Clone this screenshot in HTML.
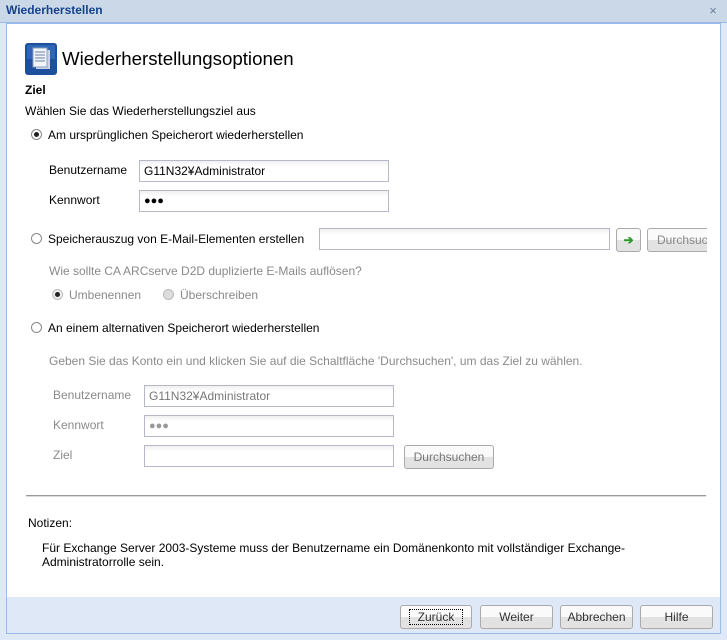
<!DOCTYPE html><html><head><style>
*{margin:0;padding:0;box-sizing:border-box}
body{width:727px;height:640px;position:relative;background:#dfe8f6;font-family:"Liberation Sans",sans-serif;font-size:12px;color:#000;overflow:hidden}
.a{position:absolute;white-space:nowrap}
.g{color:#8a8a8a}
.in{position:absolute;height:22px;border:1px solid #b5b8c8;background:linear-gradient(#f0f0f0,#fff 5px);padding:3px 4px;font-size:12px}
.rad{position:absolute;width:11px;height:11px;border-radius:50%;border:1px solid #888;background:#fff}
.rad.on:after{content:"";position:absolute;left:2px;top:2px;width:5px;height:5px;border-radius:50%;background:#222}
.btn{position:absolute;height:24px;border:1px solid #aaa;border-radius:3px;background:linear-gradient(#fafafa 50%,#e2e2e2 50%);text-align:center;line-height:22px;font-size:12px;color:#333}
</style></head><body>
<div class="a" style="left:0;top:0;width:727px;height:23px;background:#cbd8e8;border-bottom:1px solid #99bbe8"></div>
<div class="a" style="left:6px;top:3px;font-weight:bold;color:#15428b;font-size:12px">Wiederherstellen</div>
<div class="a" style="left:706px;top:4px;width:14px;height:14px;color:#6a7fa0;font-size:13px;line-height:14px;text-align:center">×</div>
<div class="a" style="left:6px;top:23px;width:715px;height:611px;border:1px solid #99bbe8;background:#dfe8f6"></div>
<div class="a" style="left:7px;top:24px;width:713px;height:573px;background:#fff"></div>
<svg class="a" style="left:25px;top:43px" width="32" height="32"><rect width="32" height="32" rx="3" fill="#1c4f9c"/><rect x="2" y="2" width="28" height="14" fill="#3a74c4" opacity=".6"/><rect x="11" y="7" width="14" height="19" fill="#c9d3e3"/><rect x="8" y="5" width="14" height="19" fill="#f2f5fa" stroke="#8aa0c0"/><g stroke="#6a80a8"><line x1="10" y1="9" x2="20" y2="9"/><line x1="10" y1="12" x2="20" y2="12"/><line x1="10" y1="15" x2="20" y2="15"/><line x1="10" y1="18" x2="20" y2="18"/></g></svg>
<div class="a" style="left:62px;top:48px;font-size:18.7px">Wiederherstellungsoptionen</div>
<div class="a" style="left:25px;top:83px;font-weight:bold">Ziel</div>
<div class="a" style="left:25px;top:104px">Wählen Sie das Wiederherstellungsziel aus</div>
<div class="rad on" style="left:31px;top:129px"></div>
<div class="a" style="left:48px;top:128px">Am ursprünglichen Speicherort wiederherstellen</div>
<div class="a" style="left:49px;top:163px">Benutzername</div>
<div class="in" style="left:139px;top:160px;width:250px">G11N32¥Administrator</div>
<div class="a" style="left:49px;top:193px">Kennwort</div>
<div class="in" style="left:139px;top:190px;width:250px;font-size:11px;line-height:14px">●●●</div>
<div class="rad" style="left:31px;top:233px"></div>
<div class="a" style="left:48px;top:232px">Speicherauszug von E-Mail-Elementen erstellen</div>
<div class="in" style="left:319px;top:228px;width:291px"></div>
<div class="btn" style="left:616px;top:228px;width:25px;color:#2a9a2a;font-weight:bold">➔</div>
<div class="a" style="left:647px;top:228px;width:60px;height:24px;overflow:hidden"><div class="btn" style="left:0;top:0;width:80px;color:#888;text-align:left;padding-left:9px">Durchsuchen</div></div>
<div class="a g" style="left:49px;top:264px">Wie sollte CA ARCserve D2D duplizierte E-Mails auflösen?</div>
<div class="rad on" style="left:52px;top:289px;border-color:#bbb;background:#eee"></div>
<div class="a g" style="left:69px;top:288px">Umbenennen</div>
<div class="rad" style="left:163px;top:289px;border-color:#bbb;background:#ddd"></div>
<div class="a g" style="left:180px;top:288px">Überschreiben</div>
<div class="rad" style="left:31px;top:322px"></div>
<div class="a" style="left:48px;top:321px">An einem alternativen Speicherort wiederherstellen</div>
<div class="a g" style="left:49px;top:354px">Geben Sie das Konto ein und klicken Sie auf die Schaltfläche 'Durchsuchen', um das Ziel zu wählen.</div>
<div class="a g" style="left:53px;top:388px">Benutzername</div>
<div class="in" style="left:144px;top:385px;width:250px;color:#777">G11N32¥Administrator</div>
<div class="a g" style="left:53px;top:418px">Kennwort</div>
<div class="in" style="left:144px;top:415px;width:250px;color:#999;font-size:11px;line-height:14px">●●●</div>
<div class="a g" style="left:53px;top:448px">Ziel</div>
<div class="in" style="left:144px;top:445px;width:250px"></div>
<div class="btn" style="left:404px;top:445px;width:90px;color:#777">Durchsuchen</div>
<div class="a" style="left:26px;top:495px;width:680px;height:2px;background:#999;border-bottom:1px solid #ddd"></div>
<div class="a" style="left:28px;top:516px">Notizen:</div>
<div class="a" style="left:42px;top:541px;line-height:14px">Für Exchange Server 2003-Systeme muss der Benutzername ein Domänenkonto mit vollständiger Exchange-<br>Administratorrolle sein.</div>
<div class="btn" style="left:400px;top:605px;width:72px"><span style="border:1px dotted #000;padding:0 8px">Zurück</span></div>
<div class="btn" style="left:480px;top:605px;width:73px">Weiter</div>
<div class="btn" style="left:560px;top:605px;width:73px">Abbrechen</div>
<div class="btn" style="left:640px;top:605px;width:73px">Hilfe</div>
</body></html>
